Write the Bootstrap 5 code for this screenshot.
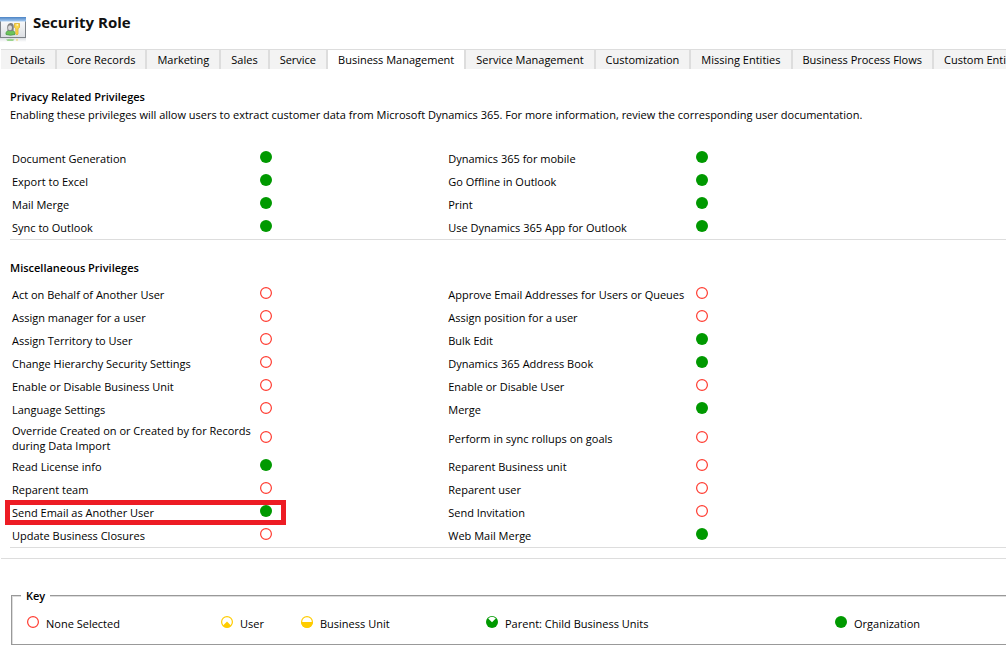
<!DOCTYPE html>
<html lang="en">
<head>
<meta charset="utf-8">
<meta name="viewport" content="width=device-width, initial-scale=1">
<title>Security Role</title>
<link href="https://cdn.jsdelivr.net/npm/bootstrap@5.3.0/dist/css/bootstrap.min.css" rel="stylesheet">
<style>
  body { font-family: "Open Sans", "Noto Sans", sans-serif; font-size: 11px; line-height: 15px; color: #000; background: #fff; overflow-x: hidden; }
  .page-head { height: 49px; padding-top: 12px; gap: 7px; }
  .page-head h1 { font-size: 15px; line-height: 20px; color: #111; }
  .page-head svg { margin-top: 5px; }
  .role-tabs { margin-left: 1px; border-top: 1px solid #ddd; overflow: hidden; height: 20px; }
  .role-tabs button { flex: none; height: 19px; padding: 2px 10px; border: 0; border-right: 2px solid #ddd; background: #f3f3f3; color: #000; white-space: nowrap; line-height: 15px; }
  .role-tabs button:first-child { padding-left: 9px; }
  .role-tabs button.active { background: #fff; }
  .section-box { margin-left: 10px; padding-top: 20px; border-bottom: 1px solid #ddd; }
  .section-box h2, .key-title { font-size: 11px; line-height: 15px; font-weight: 600; }
  .section-box h2 { margin: 0 0 8px; }
  .section-box h2.has-note { margin-bottom: 3px; }
  .note { margin: 0 0 25px; }
  .priv-table { table-layout: fixed; }
  .priv-table td { height: 23px; padding: 2px; vertical-align: middle; }
  .priv-table td:nth-child(even) { padding: 0 1px 3px; }
  .c-name { width: 25%; }
  .c-level { width: 18.8%; }
  .level { display: block; width: 12px; height: 12px; padding: 0; border: 0; background: none; }
  .level svg, .key-item svg { display: block; width: 12px; height: 12px; }
  .marked { position: relative; }
  .marked::after { content: ""; position: absolute; inset: -1px -27px -1px -5px; border: 5px solid #ed1c24; pointer-events: none; }
  .rule { margin: 10px 0 36px 1px; height: 1px; background: #ddd; }
  .key-box { position: relative; margin: 0 0 0 11px; height: 50px; border: 1px solid #999; border-right: 0; box-shadow: inset 1px 1px #ddd, 0 1px #ddd; }
  .key-title { position: absolute; top: -8px; left: 9px; width: auto; padding: 0 5px; margin: 0; background: #fff; float: none; }
  .key-grid { display: grid; grid-template-columns: 194fr 80fr 185fr 349fr 171fr; padding: 20px 0 0 15px; }
  .key-item { gap: 7px; white-space: nowrap; }
</style>
</head>
<body>
<svg class="position-absolute" width="0" height="0" aria-hidden="true">
  <symbol id="none" viewBox="0 0 12 12"><circle cx="6" cy="6" r="5.4" fill="#fff" stroke="#ff3b30" stroke-width="1.2"/></symbol>
  <symbol id="org" viewBox="0 0 12 12"><circle cx="6" cy="6" r="6" fill="#090"/></symbol>
  <symbol id="user" viewBox="0 0 12 12"><circle cx="6" cy="6" r="5.4" fill="#fff" stroke="#fc0" stroke-width="1.2"/><path d="M6 5.500L1.800 9.800A5.600 5.600 0 0 0 10.200 9.800Z" fill="#fc0"/></symbol>
  <symbol id="unit" viewBox="0 0 12 12"><circle cx="6" cy="6" r="5.4" fill="#fff" stroke="#fc0" stroke-width="1.2"/><path d="M0 6H12A6 6 0 0 1 0 6Z" fill="#fc0"/></symbol>
  <symbol id="parent" viewBox="0 0 12 12"><circle cx="6" cy="6" r="6" fill="#090"/><path d="M6 6.200L2.200 2.500A5.200 5.200 0 0 1 9.800 2.500Z" fill="#fff"/></symbol>
</svg>

<header class="page-head d-flex align-items-start">
  <svg width="26" height="26" viewBox="0 0 26 26" aria-hidden="true">
    <defs>
      <linearGradient id="bar" x2="0" y2="1"><stop stop-color="#4b83c4"/><stop offset="1" stop-color="#a9cdf2"/></linearGradient>
      <linearGradient id="pane" x2="0" y2="1"><stop stop-color="#fff"/><stop offset="1" stop-color="#dcdfe3"/></linearGradient>
      <linearGradient id="fade" x2="0" y2="1"><stop stop-color="#dcdfe3"/><stop offset="1" stop-color="#fff"/></linearGradient>
    </defs>
    <rect x="0.5" y="0.5" width="25" height="20" fill="url(#pane)" stroke="#7d8288"/>
    <rect width="26" height="4.5" fill="url(#bar)"/>
    <rect y="21" width="26" height="4" fill="url(#fade)"/>
    <path d="M6 17.500C5.500 14.500 8 13 10.500 13S15.500 14.500 15 17.500Q10.500 19 6 17.500Z" fill="#6cc35a" stroke="#3e8f3c" stroke-width=".7"/>
    <path d="M7.500 13.500Q6 6.500 10.500 6T13.500 13.500Q10.500 15 7.500 13.500Z" fill="#808080"/>
    <ellipse cx="10" cy="10.800" rx="2" ry="2.500" fill="#d9d9d9"/>
    <path d="M14.500 6.500H19.500V10.500L18 11.500V17L17 18L15.800 17V11.500L14.500 10.500Z" fill="#fbd84b" stroke="#dcae2c" stroke-width=".8"/>
    <rect x="16.500" y="7.300" width="1.500" height="1.200" fill="#fff"/>
    <path d="M6 22.500Q10.500 21 14.500 22.500L13 24H7.500Z" fill="#9bd58f"/>
    <path d="M16 22H18L17.500 24H16.500Z" fill="#f3dd8b"/>
  </svg>
  <h1 class="m-0 fw-bold">Security Role</h1>
</header>

<nav class="role-tabs d-flex" role="tablist" aria-label="Role sections">
  <button type="button" role="tab">Details</button>
  <button type="button" role="tab">Core Records</button>
  <button type="button" role="tab">Marketing</button>
  <button type="button" role="tab">Sales</button>
  <button type="button" role="tab">Service</button>
  <button type="button" role="tab" class="active" aria-selected="true">Business Management</button>
  <button type="button" role="tab">Service Management</button>
  <button type="button" role="tab">Customization</button>
  <button type="button" role="tab">Missing Entities</button>
  <button type="button" role="tab">Business Process Flows</button>
  <button type="button" role="tab">Custom Entities</button>
</nav>

<main>
  <section class="section-box">
    <h2 class="has-note">Privacy Related Privileges</h2>
    <p class="note">Enabling these privileges will allow users to extract customer data from Microsoft Dynamics 365. For more information, review the corresponding user documentation.</p>
    <table class="priv-table w-100">
      <colgroup><col class="c-name"><col class="c-level"><col class="c-name"><col></colgroup>
      <tbody>
        <tr><td id="p1">Document Generation</td><td><button class="level" aria-labelledby="p1"><svg><use href="#org"/></svg></button></td><td id="p2">Dynamics 365 for mobile</td><td><button class="level" aria-labelledby="p2"><svg><use href="#org"/></svg></button></td></tr>
        <tr><td id="p3">Export to Excel</td><td><button class="level" aria-labelledby="p3"><svg><use href="#org"/></svg></button></td><td id="p4">Go Offline in Outlook</td><td><button class="level" aria-labelledby="p4"><svg><use href="#org"/></svg></button></td></tr>
        <tr><td id="p5">Mail Merge</td><td><button class="level" aria-labelledby="p5"><svg><use href="#org"/></svg></button></td><td id="p6">Print</td><td><button class="level" aria-labelledby="p6"><svg><use href="#org"/></svg></button></td></tr>
        <tr><td id="p7">Sync to Outlook</td><td><button class="level" aria-labelledby="p7"><svg><use href="#org"/></svg></button></td><td id="p8">Use Dynamics 365 App for Outlook</td><td><button class="level" aria-labelledby="p8"><svg><use href="#org"/></svg></button></td></tr>
      </tbody>
    </table>
  </section>

  <section class="section-box">
    <h2>Miscellaneous Privileges</h2>
    <table class="priv-table w-100">
      <colgroup><col class="c-name"><col class="c-level"><col class="c-name"><col></colgroup>
      <tbody>
        <tr><td id="m1">Act on Behalf of Another User</td><td><button class="level" aria-labelledby="m1"><svg><use href="#none"/></svg></button></td><td id="m2">Approve Email Addresses for Users or Queues</td><td><button class="level" aria-labelledby="m2"><svg><use href="#none"/></svg></button></td></tr>
        <tr><td id="m3">Assign manager for a user</td><td><button class="level" aria-labelledby="m3"><svg><use href="#none"/></svg></button></td><td id="m4">Assign position for a user</td><td><button class="level" aria-labelledby="m4"><svg><use href="#none"/></svg></button></td></tr>
        <tr><td id="m5">Assign Territory to User</td><td><button class="level" aria-labelledby="m5"><svg><use href="#none"/></svg></button></td><td id="m6">Bulk Edit</td><td><button class="level" aria-labelledby="m6"><svg><use href="#org"/></svg></button></td></tr>
        <tr><td id="m7">Change Hierarchy Security Settings</td><td><button class="level" aria-labelledby="m7"><svg><use href="#none"/></svg></button></td><td id="m8">Dynamics 365 Address Book</td><td><button class="level" aria-labelledby="m8"><svg><use href="#org"/></svg></button></td></tr>
        <tr><td id="m9">Enable or Disable Business Unit</td><td><button class="level" aria-labelledby="m9"><svg><use href="#none"/></svg></button></td><td id="m10">Enable or Disable User</td><td><button class="level" aria-labelledby="m10"><svg><use href="#none"/></svg></button></td></tr>
        <tr><td id="m11">Language Settings</td><td><button class="level" aria-labelledby="m11"><svg><use href="#none"/></svg></button></td><td id="m12">Merge</td><td><button class="level" aria-labelledby="m12"><svg><use href="#org"/></svg></button></td></tr>
        <tr><td id="m13">Override Created on or Created by for Records during Data Import</td><td><button class="level" aria-labelledby="m13"><svg><use href="#none"/></svg></button></td><td id="m14">Perform in sync rollups on goals</td><td><button class="level" aria-labelledby="m14"><svg><use href="#none"/></svg></button></td></tr>
        <tr><td id="m15">Read License info</td><td><button class="level" aria-labelledby="m15"><svg><use href="#org"/></svg></button></td><td id="m16">Reparent Business unit</td><td><button class="level" aria-labelledby="m16"><svg><use href="#none"/></svg></button></td></tr>
        <tr><td id="m17">Reparent team</td><td><button class="level" aria-labelledby="m17"><svg><use href="#none"/></svg></button></td><td id="m18">Reparent user</td><td><button class="level" aria-labelledby="m18"><svg><use href="#none"/></svg></button></td></tr>
        <tr><td id="m19" class="marked">Send Email as Another User</td><td><button class="level" aria-labelledby="m19"><svg><use href="#org"/></svg></button></td><td id="m20">Send Invitation</td><td><button class="level" aria-labelledby="m20"><svg><use href="#none"/></svg></button></td></tr>
        <tr><td id="m21">Update Business Closures</td><td><button class="level" aria-labelledby="m21"><svg><use href="#none"/></svg></button></td><td id="m22">Web Mail Merge</td><td><button class="level" aria-labelledby="m22"><svg><use href="#org"/></svg></button></td></tr>
      </tbody>
    </table>
  </section>
</main>

<div class="rule"></div>

<fieldset class="key-box">
  <legend class="key-title">Key</legend>
  <div class="key-grid">
    <div class="key-item d-flex"><svg><use href="#none"/></svg>None Selected</div>
    <div class="key-item d-flex"><svg><use href="#user"/></svg>User</div>
    <div class="key-item d-flex"><svg><use href="#unit"/></svg>Business Unit</div>
    <div class="key-item d-flex"><svg><use href="#parent"/></svg>Parent: Child Business Units</div>
    <div class="key-item d-flex"><svg><use href="#org"/></svg>Organization</div>
  </div>
</fieldset>
</body>
</html>
